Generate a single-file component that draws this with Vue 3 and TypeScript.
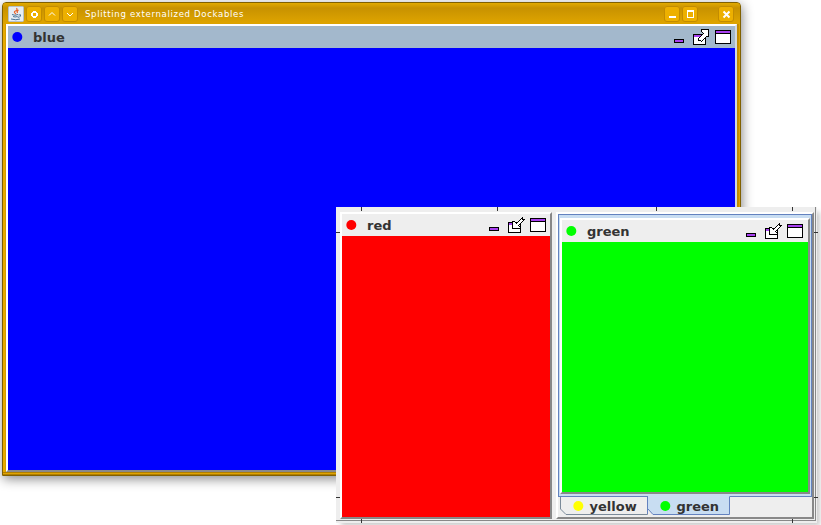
<script setup lang="ts">
interface Tab { label: string; color: string; active: boolean }
interface Pane { label: string; color: string; tabs: Tab[] }
interface DockWindow { kind: 'main' | 'float'; title: string; panes: Pane[] }

const windows: DockWindow[] = [
  { kind: 'main', title: 'Splitting externalized Dockables', panes: [{ label: 'blue', color: '#00f', tabs: [] }] },
  {
    kind: 'float',
    title: '',
    panes: [
      { label: 'red', color: '#f00', tabs: [] },
      {
        label: 'green',
        color: '#0f0',
        tabs: [
          { label: 'yellow', color: '#ff0', active: false },
          { label: 'green', color: '#0f0', active: true },
        ],
      },
    ],
  },
]
const ticks = ['t1', 't2', 't3', 't4', 'b1', 'b2', 'l1', 'l2', 'r1', 'r2']
</script>

<template>
  <main class="desktop">
    <section v-for="win in windows" :key="win.kind" class="window" :class="win.kind">
      <div v-if="win.title" class="titlebar">
        <svg class="java" viewBox="0 0 16 16"><rect x=".5" y=".5" width="15" height="15" rx="1" fill="#e6edf4" stroke="#b4c0cc" /><path d="M8.5 2Q10 4 7.5 5T8 8M10.5 4Q8.5 5 9.5 7" fill="none" stroke="#e8642c" stroke-width="1.2" /><path d="M4 8.5Q7 10 10 8.5M5 10.5Q7 11.500 9.5 10.5M10.5 9q3-1 2 1t-3 1M3 13q5 1.5 9 0" fill="none" stroke="#4a7396" /></svg>
        <span class="button"><svg viewBox="0 0 16 16" shape-rendering="crispEdges"><path d="M7 5H10V6H11V7H12V10H11V11H10V12H7V11H6V10H5V7H6V6H7ZM7 7V10H10V7Z" fill="#fff" fill-rule="evenodd" /></svg></span>
        <span class="button"><svg viewBox="0 0 16 16"><path d="M5 9.5L8 6.5L11 9.5" fill="none" stroke="#fff" /></svg></span>
        <span class="button"><svg viewBox="0 0 16 16"><path d="M5 7L8 10L11 7" fill="none" stroke="#fff" /></svg></span>
        <span class="title">{{ win.title }}</span>
        <span class="button min"><svg viewBox="0 0 16 16"><path d="M5 10h7v2H5z" fill="#fff" /></svg></span>
        <span class="button"><svg viewBox="0 0 16 16"><path d="M5 4h7v8H5zM6 6v5h5V6z" fill="#fff" fill-rule="evenodd" /></svg></span>
        <span class="button close"><svg viewBox="0 0 16 16"><path d="M5.5 5.5l6 6M11.5 5.5l-6 6" stroke="#fff" stroke-width="2" /></svg></span>
      </div>
      <template v-else>
        <i v-for="tick in ticks" :key="tick" class="tick" :class="tick" />
      </template>
      <div class="content">
        <div v-for="pane in win.panes" :key="pane.label" class="slot" :class="{ stacked: pane.tabs.length }">
          <div class="frame">
            <article class="panel">
              <header class="caption">
                <svg class="dot" viewBox="0 0 11 10"><circle cx="5.3" cy="5" r="5" :fill="pane.color" /></svg>
                <span>{{ pane.label }}</span>
                <svg class="tools" viewBox="0 0 60 18" shape-rendering="crispEdges">
                  <path d="M1.5 11.5h9v3h-9z" fill="#a840f0" stroke="#000" />
                  <path d="M20.5 6.5h12v10h-12z" fill="#fff" stroke="#000" />
                  <path d="M21 7h11v2H21z" fill="#a840f0" />
                  <path v-if="win.kind === 'main'" d="M28.5 1.5H35.5V8.500L33.5 8.500L28.5 13.500L27.5 12.5L25.5 12.5V10.5L30.5 5.5L28.5 3.5Z" fill="#fff" stroke="#000" />
                  <path v-else d="M24.5 5.5L26.5 5.5L28.5 7.5L34.5 1.5V3.5H36.5L30.5 9.5L32.5 11.5V12.5H24.5Z" fill="#fff" stroke="#000" />
                  <path d="M42.5 2.5h15v13h-15z" fill="#fff" stroke="#000" />
                  <path d="M43 3h14v2H43z" fill="#a840f0" />
                  <path d="M43 5.5h14" stroke="#000" />
                </svg>
              </header>
              <div class="body" :style="{ backgroundColor: pane.color }" />
            </article>
          </div>
          <div v-if="pane.tabs.length" class="tabs">
            <div v-for="tab in pane.tabs" :key="tab.label" class="tab" :class="{ active: tab.active }">
              <svg class="shape" :viewBox="tab.active ? '0 0 82 20' : '0 0 88 20'">
                <path v-if="tab.active" d="M0 0V13L5 18.5H81.5V.5H82V0Z" fill="#c8ddf2" />
                <path v-if="tab.active" d="M0 13L5 18.5H81.5V.5" fill="none" stroke="#6382bf" />
                <path v-else d="M.5 .5V13L6 18.5H87.5V.5Z" fill="#eee" stroke="#7a8a99" />
                <path v-if="!tab.active" d="M0 .5H87.5V18" fill="none" stroke="#6382bf" />
              </svg>
              <svg class="dot" viewBox="0 0 11 10"><circle cx="5.3" cy="5" r="5" :fill="tab.color" /></svg>
              <span>{{ tab.label }}</span>
            </div>
          </div>
        </div>
      </div>
    </section>
  </main>
</template>

<style>
body { background: #fff; }
</style>
<style scoped>
* { box-sizing: border-box; }
svg { display: block; }
.desktop { position: relative; width: 821px; height: 525px; overflow: hidden; background: #fff; font-family: "DejaVu Sans", sans-serif; }
.window { position: absolute; }
.main { left: 2px; top: 2px; width: 739px; height: 474px; border: 1px solid #806000; border-radius: 4px 4px 0 0; background: linear-gradient(90deg, #e7aa00 2px, #c38f00 3px, #d69c00 734px, #a97700 735px, #e0a400 736px); box-shadow: 1px 3px 12px #888, inset 0 -1px #b07e00, inset 0 -2px #e0a400, inset 0 -3px #b07e00; }
.titlebar { height: 21px; padding: 3px 6px 0 5px; display: flex; gap: 2px; background: linear-gradient(#e2aa00, #c89200 5px, #dda300 19px); border-radius: 3px 3px 0 0; }
.java { width: 16px; height: 16px; }
.button { width: 16px; height: 16px; border-radius: 3px; background: #edb000; box-shadow: inset 0 0 0 1px #c38c00; flex: none; }
.title { margin-left: 5px; color: #fff; font-family: "DejaVu Sans Condensed", "DejaVu Sans", sans-serif; font-size: 9.5px; font-stretch: condensed; line-height: 16px; letter-spacing: .67px; white-space: nowrap; }
.min { margin-left: auto; }
.close { margin-left: 18px; }
.main .content { width: 731px; height: 448px; margin-left: 3px; }
.main .slot, .main .frame { height: 100%; }
.panel { height: 100%; border: 2px solid; border-color: #fff #888 #888 #fff; }
.main .panel { border-right-color: #d4d8df; }
.caption { height: 22px; display: flex; align-items: center; background: #eee; font-size: 13px; font-weight: bold; color: #333; }
.main .caption { background: #a3b8cc; }
.dot { width: 11px; height: 10px; flex: none; }
.caption .dot { margin-left: 4px; }
.caption span { margin-left: 10px; }
.tools { width: 60px; height: 18px; margin: 0 2px 0 auto; }
.stacked .tools { margin-right: 3px; }
.body { height: calc(100% - 22px); }
.float { left: 336px; top: 207px; width: 481px; height: 316px; background: #eee; box-shadow: 4px 4px 5px -1px #ccc; }
.float .content { display: flex; gap: 4px; width: 480px; height: 314px; padding: 5px 1px 0 4px; border-right: 1px solid #888; border-bottom: 1px solid #888; }
.float .slot { width: 212px; height: 307px; }
.float .frame { height: 100%; }
.float .slot.stacked { width: 258px; flex: none; border: 2px solid; border-color: #fff #888 #888 #fff; }
.float .stacked .frame { height: 283px; border: 1px solid #6382bf; background: #c8ddf2; padding: 3px 1px 2px; }
.tabs { display: flex; padding-left: 2px; margin-top: -1px; }
.tab { position: relative; display: flex; align-items: center; width: 88px; height: 20px; font-size: 13px; font-weight: bold; color: #333; padding-left: 13px; }
.tab.active { width: 82px; padding-left: 12px; }
.shape { position: absolute; inset: 0; width: 100%; height: 100%; }
.tab > .dot, .tab > span { position: relative; }
.tab > span { margin-left: 5.5px; }
.tick { position: absolute; background: #333; width: 1px; height: 4px; top: 0; }
.t1 { left: 25px; }
.t2 { left: 161px; }
.t3 { left: 320px; }
.t4 { left: 456px; }
.b1 { left: 25px; top: 312px; }
.b2 { left: 456px; top: 312px; }
.l1, .l2, .r1, .r2 { width: 4px; height: 1px; }
.l1 { top: 25px; }
.l2 { top: 290px; }
.r1 { left: 478px; top: 25px; }
.r2 { left: 478px; top: 290px; }
</style>
